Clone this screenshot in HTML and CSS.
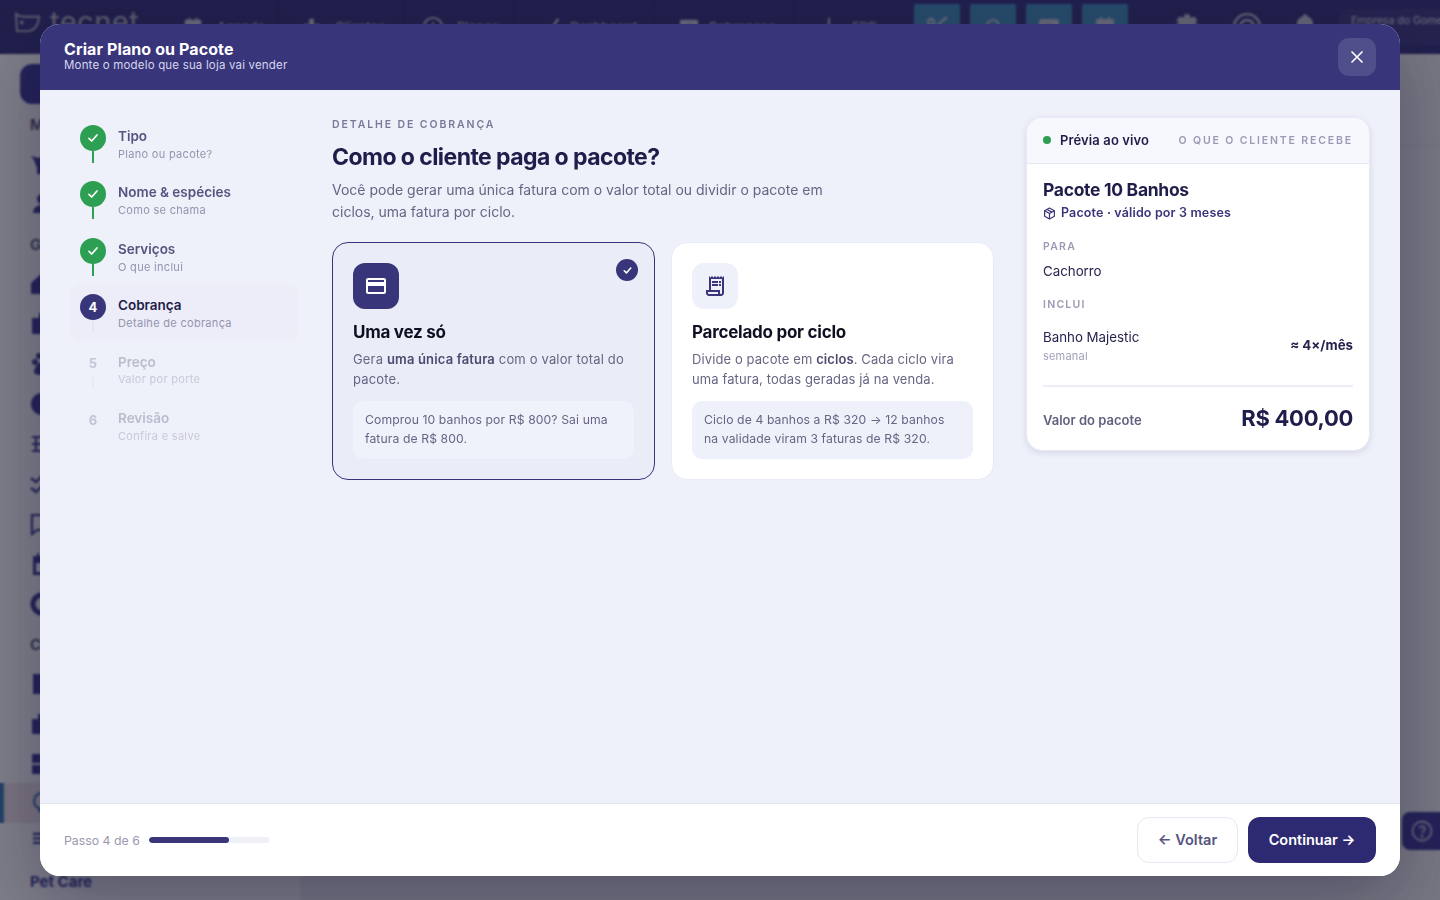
FILE: index.html
```html
<!DOCTYPE html>
<html lang="pt-BR">
<head>
<meta charset="utf-8">
<title>Criar Plano ou Pacote</title>
<link rel="stylesheet" href="styles.css">
</head>
<body>
<div class="app">
  <header class="topbar">
    <div class="brand">
      <svg class="brand-icon" viewBox="0 0 26 22" fill="none" stroke="currentColor" stroke-width="2"><path d="M1 2c4 3 6 3 8 3h16c0 8-5 15-13 15H2z"/><circle cx="7" cy="11" r="1" fill="currentColor"/></svg>
      <span class="brand-name">tecnet</span>
    </div>
    <nav class="nav">
      <a class="nav-item nav-agenda"><svg viewBox="0 0 24 24" fill="currentColor"><path d="M7 2h2v3H7zM15 2h2v3h-2zM3 5a1 1 0 0 1 1-1h16a1 1 0 0 1 1 1v16H3z"/></svg><span>Agenda</span></a>
      <a class="nav-item nav-clientes"><svg viewBox="0 0 24 24" fill="currentColor"><path d="M9 3h5v6h7v12H3V9h6z"/></svg><span>Clientes</span></a>
      <a class="nav-item nav-planos"><svg viewBox="0 0 24 24" fill="none" stroke="currentColor" stroke-width="2"><circle cx="12" cy="12" r="10"/><path d="M12 7v6"/></svg><span>Planos</span></a>
      <a class="nav-item nav-dash"><svg viewBox="0 0 24 24" fill="none" stroke="currentColor" stroke-width="2.4"><path d="M3 14l5 6L20 3"/></svg><span>Dashboard</span></a>
      <a class="nav-item nav-cob"><svg viewBox="0 0 24 24" fill="currentColor"><path d="M2 6a2 2 0 0 1 2-2h16a2 2 0 0 1 2 2v14H2zm10 3a2 2 0 1 0 0 4 2 2 0 0 0 0-4z" fill-rule="evenodd"/></svg><span>Cobranças</span></a>
      <a class="nav-item nav-erp"><svg viewBox="0 0 24 24" fill="currentColor"><path d="M11 2h2v20h-2z"/></svg><span>ERP</span></a>
    </nav>
    <div class="quick">
      <span class="quick-btn"><svg viewBox="0 0 24 24" fill="none" stroke="currentColor" stroke-width="2.4"><circle cx="6" cy="7" r="3"/><path d="M8 10l14 12M8 14L22 2"/></svg></span>
      <span class="quick-btn"><svg viewBox="0 0 24 24" fill="none" stroke="currentColor" stroke-width="2.2"><path d="M6 18V11a6 6 0 0 1 12 0v7M3 18h18"/></svg></span>
      <span class="quick-btn"><svg viewBox="0 0 24 24" fill="currentColor"><path d="M2 6a2 2 0 0 1 2-2h16a2 2 0 0 1 2 2v14H2zm10 3a2 2 0 1 0 0 4 2 2 0 0 0 0-4z" fill-rule="evenodd"/></svg></span>
      <span class="quick-btn"><svg viewBox="0 0 24 24" fill="currentColor"><path d="M7 2h2v3H7zM15 2h2v3h-2zM3 5a1 1 0 0 1 1-1h16a1 1 0 0 1 1 1v16H3z"/></svg></span>
    </div>
    <div class="tools">
      <svg class="tool tool-gear" viewBox="0 0 24 24" fill="currentColor"><path d="M10 1h4l1 3 3-1 3 3-2 3 3 1v4l-3 1 2 3-3 3-3-2-1 3h-4l-1-3-3 2-3-3 2-3-3-1v-4l3-1-2-3 3-3 3 1z"/></svg>
      <svg class="tool tool-at" viewBox="0 0 24 24" fill="none" stroke="currentColor" stroke-width="2"><circle cx="12" cy="12" r="11"/><circle cx="12" cy="12" r="6"/></svg>
      <svg class="tool tool-bell" viewBox="0 0 24 24" fill="currentColor"><path d="M12 1a2 2 0 0 1 2 2c4 1 5 4 5 8v5l2 3H3l2-3v-5c0-4 1-7 5-8a2 2 0 0 1 2-2z"/></svg>
      <div class="company">Empresa do Gomes</div>
    </div>
  </header>
  <div class="workspace">
    <aside class="sidebar">
      <div class="side-top"></div>
      <div class="side-row side-label">Menu</div>
      <div class="side-row"><svg viewBox="0 0 24 24" fill="currentColor"><path d="M1 4l8 2 6-3v6l8 3-8 3v7H7v-6L4 8z"/></svg></div>
      <div class="side-row"><svg viewBox="0 0 24 24" fill="currentColor"><circle cx="12" cy="7" r="5"/><path d="M3 21c0-5 4-8 9-8s9 3 9 8z"/></svg></div>
      <div class="side-row side-label">Gestão</div>
      <div class="side-row"><svg viewBox="0 0 24 24" fill="currentColor"><path d="M12 1l11 10v11H1V11z"/></svg></div>
      <div class="side-row"><svg viewBox="0 0 24 24" fill="currentColor"><path d="M9 1h6v5h7v16H2V6h7z"/></svg></div>
      <div class="side-row"><svg viewBox="0 0 24 24" fill="currentColor"><circle cx="5" cy="10" r="3"/><circle cx="9" cy="4" r="3"/><path d="M12 10c4 0 9 6 9 10 0 2-2 3-9 3s-8-2-8-3c0-4 4-10 8-10z"/></svg></div>
      <div class="side-row"><svg viewBox="0 0 24 24" fill="currentColor"><circle cx="12" cy="12" r="11"/></svg></div>
      <div class="side-row"><svg viewBox="0 0 24 24" fill="currentColor"><path d="M2 4h20v2H2zM2 11h20v2H2zM2 18h20v2H2zM5 6h2v12H5z"/></svg></div>
      <div class="side-row"><svg viewBox="0 0 24 24" fill="none" stroke="currentColor" stroke-width="2.4"><path d="M1 6l5 4 8-8M1 16l5 4 8-8"/></svg></div>
      <div class="side-row"><svg viewBox="0 0 24 24" fill="none" stroke="currentColor" stroke-width="2.2"><path d="M2 3h20v15H7l-5 4z"/></svg></div>
      <div class="side-row"><svg viewBox="0 0 24 24" fill="currentColor"><path d="M7 1h2v3H7zM15 1h2v3h-2zM3 4h18v19H3zm3 7v9h12v-9z" fill-rule="evenodd"/></svg></div>
      <div class="side-row"><svg viewBox="0 0 24 24" fill="none" stroke="currentColor" stroke-width="5"><circle cx="12" cy="12" r="9"/></svg></div>
      <div class="side-row side-label">Config</div>
      <div class="side-row"><svg viewBox="0 0 24 24" fill="currentColor"><path d="M3 2h18v20H3z"/></svg></div>
      <div class="side-row"><svg viewBox="0 0 24 24" fill="currentColor"><path d="M8 2h8v5h6v15H2V7h6z"/></svg></div>
      <div class="side-row"><svg viewBox="0 0 24 24" fill="currentColor"><path d="M2 2h9v9H2zM13 2h9v9h-9zM2 13h9v9H2zM13 13h9v9h-9z"/></svg></div>
      <div class="side-row side-active"><svg viewBox="0 0 24 24" fill="none" stroke="currentColor" stroke-width="2.4"><circle cx="12" cy="10" r="8"/><path d="M8 20h8"/></svg></div>
      <div class="side-row side-short"><svg viewBox="0 0 24 24" fill="currentColor"><path d="M4 5h18v3H4zM4 11h18v3H4zM4 17h18v3H4z"/></svg></div>
      <div class="side-foot">Pet Care</div>
    </aside>
    <main class="page">
      <div class="page-head"></div>
    </main>
  </div>
  <button class="help"><svg viewBox="0 0 24 24" fill="none" stroke="currentColor" stroke-width="1.8"><circle cx="12" cy="12" r="9.5"/><path d="M9.2 9.4a2.9 2.9 0 0 1 5.6.6c0 2-2.8 2.3-2.8 4"/><circle cx="12" cy="17" r=".6" fill="currentColor"/></svg></button>
</div>

<div class="overlay">
  <section class="modal">
    <header class="modal-head">
      <div class="modal-titles">
        <h1>Criar Plano ou Pacote</h1>
        <p>Monte o modelo que sua loja vai vender</p>
      </div>
      <button class="close"><svg viewBox="0 0 24 24" fill="none" stroke="currentColor" stroke-width="2" stroke-linecap="round"><path d="M6 6l12 12M18 6L6 18"/></svg></button>
    </header>

    <div class="modal-body">
      <ol class="steps">
        <li class="step done">
          <span class="dot"><svg viewBox="0 0 24 24" fill="none" stroke="currentColor" stroke-width="2.6" stroke-linecap="round" stroke-linejoin="round"><path d="M6 12.5l4 4 8-9"/></svg></span>
          <div class="step-text"><strong>Tipo</strong><small>Plano ou pacote?</small></div>
        </li>
        <li class="step done">
          <span class="dot"><svg viewBox="0 0 24 24" fill="none" stroke="currentColor" stroke-width="2.6" stroke-linecap="round" stroke-linejoin="round"><path d="M6 12.5l4 4 8-9"/></svg></span>
          <div class="step-text"><strong>Nome &amp; espécies</strong><small>Como se chama</small></div>
        </li>
        <li class="step done">
          <span class="dot"><svg viewBox="0 0 24 24" fill="none" stroke="currentColor" stroke-width="2.6" stroke-linecap="round" stroke-linejoin="round"><path d="M6 12.5l4 4 8-9"/></svg></span>
          <div class="step-text"><strong>Serviços</strong><small>O que inclui</small></div>
        </li>
        <li class="step active">
          <span class="dot">4</span>
          <div class="step-text"><strong>Cobrança</strong><small>Detalhe de cobrança</small></div>
        </li>
        <li class="step todo">
          <span class="dot">5</span>
          <div class="step-text"><strong>Preço</strong><small>Valor por porte</small></div>
        </li>
        <li class="step todo last">
          <span class="dot">6</span>
          <div class="step-text"><strong>Revisão</strong><small>Confira e salve</small></div>
        </li>
      </ol>

      <div class="content">
        <div class="eyebrow">DETALHE DE COBRANÇA</div>
        <h2>Como o cliente paga o pacote?</h2>
        <p class="lead">Você pode gerar uma única fatura com o valor total ou dividir o pacote em ciclos, uma fatura por ciclo.</p>
        <div class="options">
          <article class="option selected">
            <span class="option-check"><svg viewBox="0 0 24 24" fill="none" stroke="currentColor" stroke-width="3" stroke-linecap="round" stroke-linejoin="round"><path d="M6 12.5l4 4 8-9"/></svg></span>
            <span class="option-icon"><svg viewBox="0 0 24 24" fill="currentColor"><path d="M20 4H4c-1.11 0-1.99.89-1.99 2L2 18c0 1.11.89 2 2 2h16c1.11 0 2-.89 2-2V6c0-1.11-.89-2-2-2zm0 14H4v-6h16v6zm0-10H4V6h16v2z"/></svg></span>
            <h3>Uma vez só</h3>
            <p class="option-desc">Gera <b>uma única fatura</b> com o valor total do pacote.</p>
            <p class="option-note">Comprou 10 banhos por R$ 800? Sai uma fatura de R$ 800.</p>
          </article>
          <article class="option">
            <span class="option-icon"><svg viewBox="0 0 24 24" fill="currentColor"><path d="M19.5 3.5L18 2l-1.5 1.5L15 2l-1.5 1.5L12 2l-1.5 1.5L9 2 7.5 3.5 6 2v14H3v3c0 1.66 1.34 3 3 3h12c1.66 0 3-1.34 3-3V2l-1.5 1.5zM15 20H6c-.55 0-1-.45-1-1v-1h10v2zm4-1c0 .55-.45 1-1 1s-1-.45-1-1v-3H8V5h11v14zM9 7h6v2H9zm7 0h2v2h-2zm-7 3h6v2H9zm7 0h2v2h-2z"/></svg></span>
            <h3>Parcelado por ciclo</h3>
            <p class="option-desc">Divide o pacote em <b>ciclos</b>. Cada ciclo vira uma fatura, todas geradas já na venda.</p>
            <p class="option-note">Ciclo de 4 banhos a R$ 320 → 12 banhos na validade viram 3 faturas de R$ 320.</p>
          </article>
        </div>
      </div>

      <aside class="preview">
        <header class="preview-head">
          <span class="live"><i></i>Prévia ao vivo</span>
          <span class="preview-tag">O QUE O CLIENTE RECEBE</span>
        </header>
        <div class="preview-body">
          <h4>Pacote 10 Banhos</h4>
          <div class="preview-sub"><svg viewBox="0 0 24 24" fill="none" stroke="currentColor" stroke-width="2.2" stroke-linejoin="round"><path d="M12 2l9 5v10l-9 5-9-5V7z"/><path d="M3 7l9 5 9-5M12 12v10M7.5 4.5l9 5"/></svg>Pacote · válido por 3 meses</div>
          <div class="preview-label preview-label-para">PARA</div>
          <div class="preview-value preview-value-tight">Cachorro</div>
          <div class="preview-label">INCLUI</div>
          <div class="preview-line">
            <div><div class="preview-value">Banho Majestic</div><small>semanal</small></div>
            <strong>≈ 4×/mês</strong>
          </div>
          <div class="preview-total">
            <span>Valor do pacote</span>
            <strong>R$ 400,00</strong>
          </div>
        </div>
      </aside>
    </div>

    <footer class="modal-foot">
      <div class="progress">
        <span>Passo 4 de 6</span>
        <div class="bar"><div class="bar-fill" style="width:66.67%"></div></div>
      </div>
      <div class="actions">
        <button class="btn btn-ghost">← Voltar</button>
        <button class="btn btn-primary">Continuar →</button>
      </div>
    </footer>
  </section>
</div>
</body>
</html>
```

FILE: styles.css
```css
* { box-sizing: border-box; }
html, body { margin: 0; height: 100%; overflow: hidden; }
body { font-family: Inter, "Noto Sans", sans-serif; color: #1d1b45; background: #fff; }
h1, h2, h3, h4, p, ol { margin: 0; padding: 0; }
button { font-family: inherit; border: 0; cursor: pointer; }

/* background app */
.app { height: 900px; display: flex; flex-direction: column; }
.topbar { height: 54px; background: #332e78; color: #cfd0dc; display: flex; align-items: center; flex: none; }
.brand { width: 172px; display: flex; align-items: center; padding-left: 15px; gap: 10px; height: 100%; flex: none; }
.brand-icon { width: 25px; height: 21px; margin-top: -10px; color: #b6b7c6; flex: none; }
.brand-name { font-size: 29px; color: #b6b7c6; margin-top: -12px; letter-spacing: .5px; font-weight: 400; }
.nav { display: flex; height: 100%; flex: none; }
.nav-item { display: flex; align-items: center; gap: 8px; height: 100%; border-left: 1px solid #2b2768; padding-left: 24px; font-size: 13px; color: #cfd0dc; }
.nav-item svg { width: 22px; height: 22px; flex: none; }
.nav-agenda { width: 106px; padding-left: 10px; gap: 13px; border-left: 0; }
.nav-clientes { width: 126px; padding-left: 22px; gap: 12px; }
.nav-planos { width: 109px; padding-left: 17px; gap: 13px; }
.nav-dash { width: 140px; padding-left: 26px; }
.nav-cob { width: 140px; padding-left: 24px; }
.nav-erp { width: 121px; padding-left: 24px; gap: 12px; }
.quick { display: flex; gap: 10px; height: 100%; padding-top: 4px; flex: none; }
.quick-btn { width: 46px; height: 46px; background: #3f8fbc; color: #c9ccd8; display: flex; align-items: center; justify-content: center; border-radius: 2px; }
.quick-btn svg { width: 24px; height: 24px; }
.tools { display: flex; align-items: center; height: 100%; margin-left: 45px; flex: none; }
.tool { color: #c4c5d2; width: 28px; height: 28px; flex: none; }
.tool-at { margin-left: 32px; }
.tool-bell { margin-left: 30px; }
.company { margin-left: 20px; height: 36px; padding: 5px 12px; background: #3d3880; border-radius: 10px; font-size: 10.5px; color: #d8d9e3; white-space: nowrap; width: 160px; }

.workspace { flex: 1; display: flex; min-height: 0; }
.sidebar { width: 300px; background: #fff; color: #3a3592; padding: 10px 0 0 0; flex: none; box-shadow: 1px 0 3px rgba(0,0,0,.1); }
.side-top { width: 120px; height: 40px; margin-left: 20px; background: #3a3592; border-radius: 12px; }
.side-row { height: 40px; display: flex; align-items: center; padding-left: 30px; }
.side-row svg { width: 24px; height: 24px; }
.side-label { font-size: 15px; font-weight: 600; color: #47476f; }
.side-active { background: #f4e6ea; border-left: 4px solid #3a7ab4; padding-left: 26px; color: #3d7bb5; margin-top: -1px; }
.side-short { height: 30px; }
.side-short svg { width: 18px; height: 18px; }
.side-foot { font-size: 15px; font-weight: 700; padding-left: 30px; margin-top: 19px; color: #3a3592; }
.page { flex: 1; background: #f1f1f3; }
.page-head { height: 92px; border-bottom: 1px solid #d8d8de; }
.help { position: fixed; right: 0; top: 812px; width: 38px; height: 38px; border-radius: 8px 0 0 8px; background: #3a3592; color: #c4c5d8; display: flex; align-items: center; padding: 0 0 0 8px; }
.help svg { width: 24px; height: 24px; }

/* overlay + modal */
.overlay { position: fixed; inset: 0; background: rgba(20, 20, 40, .55); backdrop-filter: blur(1px); padding: 24px 40px; display: flex; }
.modal { flex: 1; display: flex; flex-direction: column; border-radius: 20px; overflow: hidden; background: #eef0fa; box-shadow: 0 24px 70px rgba(15, 14, 50, .35); }

.modal-head { height: 66px; flex: none; background: #39357a; color: #fff; display: flex; justify-content: space-between; align-items: center; padding: 0 24px; }
.modal-titles { margin-top: -4px; }
.modal-titles h1 { font-size: 16px; line-height: 20px; font-weight: 700; letter-spacing: .1px; }
.modal-titles p { font-size: 11.5px; line-height: 14px; letter-spacing: .18px; color: #d6d7ee; margin-top: -1px; }
.close { width: 38px; height: 38px; border-radius: 11px; background: #514e8c; color: #fff; display: flex; align-items: center; justify-content: center; padding: 0; }
.close svg { width: 20px; height: 20px; }

.modal-body { flex: 1; display: flex; padding: 27px 30px 0; gap: 32px; min-height: 0; }

.steps { width: 228px; list-style: none; flex: none; margin-top: -1px; margin-right: 2px; }
.step { height: 56.33px; display: flex; gap: 12px; padding: 9px 10px 0; border-radius: 10px; position: relative; }
.dot { width: 26px; height: 26px; border-radius: 50%; display: flex; align-items: center; justify-content: center; font-size: 13px; font-weight: 700; flex: none; position: relative; }
.dot svg { width: 16px; height: 16px; }
.dot::after { content: ""; position: absolute; left: 12px; top: 26px; width: 2px; height: 12px; }
.step-text { display: flex; flex-direction: column; }
.step-text strong { font-size: 13.5px; line-height: 20px; font-weight: 600; color: #55547e; margin-top: 1px; }
.step-text small { font-size: 11px; line-height: 16px; letter-spacing: .3px; color: #9494ae; }
.done .dot { background: #2d9f53; color: #fff; }
.done .dot::after { background: #2d9f53; }
.active { background: #ecedf8; }
.active .dot { background: #39357a; color: #fff; }
.active .dot::after { background: #e3e5f2; }
.active .step-text strong { color: #1f1d4a; }
.todo .dot { color: #c4c5d6; }
.todo .dot::after { background: #e8eaf5; }
.last .dot::after { display: none; }
.todo .step-text strong { color: #bbbccd; margin-top: 2px; }
.todo .step-text small { color: #c8c9d9; margin-top: -1px; }
.last .step-text strong { margin-top: 1px; }
.last .step-text small { margin-top: 0; }

.content { width: 662px; flex: none; }
.eyebrow { font-size: 10.5px; line-height: 14px; font-weight: 600; letter-spacing: 1.9px; color: #7a7a98; margin-top: 1px; }
.content h2 { font-size: 23px; line-height: 30px; font-weight: 700; letter-spacing: -.57px; color: #1f1d4a; margin-top: 10px; }
.lead { font-size: 14px; line-height: 22px; color: #666684; width: 520px; margin-top: 7px; }
.options { display: flex; gap: 16px; margin-top: 19px; }
.option { flex: 1; height: 238px; background: #fff; border: 1px solid #e8eaf5; border-radius: 16px; padding: 20px; position: relative; }
.option.selected { background: #eaecf8; border-color: #39357a; }
.option-check { position: absolute; top: 16px; right: 16px; width: 22px; height: 22px; border-radius: 50%; background: #39357a; color: #fff; display: flex; align-items: center; justify-content: center; }
.option-check svg { width: 13px; height: 13px; }
.option-icon { width: 46px; height: 46px; border-radius: 12px; background: #eff1fa; color: #39357a; display: flex; align-items: center; justify-content: center; }
.selected .option-icon { background: #39357a; color: #fff; }
.option-icon svg { width: 24px; height: 24px; }
.option h3 { font-size: 17px; line-height: 24px; font-weight: 700; letter-spacing: -.25px; color: #0f0f22; margin-top: 11px; }
.option-desc { font-size: 13px; line-height: 20px; color: #666684; margin-top: 5px; letter-spacing: .1px; }
.selected .option-desc { letter-spacing: .16px; }
.option-desc b { font-weight: 600; color: #4c4b70; }
.option-note { font-size: 12.2px; line-height: 19px; color: #666684; background: #eef0fa; border-radius: 10px; padding: 9px 12px 11px; margin-top: 12px; letter-spacing: .1px; }
.selected .option-note { background: #eff1fb; }

.preview { width: 344px; height: 334px; flex: none; background: #fff; border-radius: 16px; border: 1px solid #e6e8f4; box-shadow: 0 2px 6px rgba(40, 38, 100, .12); overflow: hidden; }
.preview-head { height: 46px; background: #f7f8fd; border-bottom: 1px solid #e6e8f4; display: flex; align-items: center; justify-content: space-between; padding: 0 16px 2px; }
.live { display: flex; align-items: center; gap: 9px; font-size: 13px; font-weight: 600; letter-spacing: .12px; color: #1f1d4a; }
.live i { width: 8px; height: 8px; border-radius: 50%; background: #2d9f53; }
.preview-tag { font-size: 10.5px; font-weight: 600; letter-spacing: 1.85px; color: #9a9ab4; margin-top: 2px; }
.preview-body { padding: 14px 16px 0; }
.preview-body h4 { font-size: 17.5px; line-height: 24px; font-weight: 700; letter-spacing: -.3px; color: #1f1d4a; }
.preview-sub { display: flex; align-items: center; gap: 5px; font-size: 12.5px; line-height: 18px; font-weight: 600; letter-spacing: .15px; color: #39357a; margin-top: 2px; }
.preview-sub svg { width: 13px; height: 13px; }
.preview-label { font-size: 10.5px; line-height: 14px; font-weight: 600; letter-spacing: 1.25px; color: #9a9ab4; margin-top: 17px; }
.preview-label-para { margin-top: 18px; }
.preview-value { font-size: 13.3px; line-height: 20px; color: #26244f; margin-top: 8px; }
.preview-value-tight { margin-top: 7px; }
.preview-line { display: flex; justify-content: space-between; align-items: center; margin-top: 7px; padding-bottom: 21px; border-bottom: 2px solid #eceef7; }
.preview-line small { font-size: 11px; line-height: 16px; color: #a0a0ba; display: block; margin-top: 1px; letter-spacing: .2px; }
.preview-line strong { font-size: 13.3px; font-weight: 700; color: #26244f; margin-top: 7px; }
.preview-total { display: flex; justify-content: space-between; align-items: center; margin-top: 14px; }
.preview-total span { font-size: 13px; font-weight: 600; color: #61617f; margin-top: 3px; }
.preview-total strong { font-size: 22px; line-height: 34px; font-weight: 700; letter-spacing: -.3px; color: #1f1d4a; }

.modal-foot { height: 73px; flex: none; background: #fff; border-top: 1px solid #e3e5f1; display: flex; align-items: center; justify-content: space-between; padding: 0 24px; }
.progress { display: flex; align-items: center; gap: 9px; font-size: 12.3px; color: #9898b0; }
.bar { width: 120px; height: 6px; border-radius: 3px; background: #eff0f8; overflow: hidden; }
.bar-fill { height: 100%; background: #39357a; border-radius: 3px; }
.actions { display: flex; gap: 10px; }
.btn { height: 46px; border-radius: 12px; font-size: 14.5px; font-weight: 600; padding: 0 0 2px; }
.btn-ghost { width: 101px; background: #fff; color: #55547e; border: 1px solid #e6e8f2; }
.btn-primary { width: 128px; background: #2e2a72; color: #fff; }
```
